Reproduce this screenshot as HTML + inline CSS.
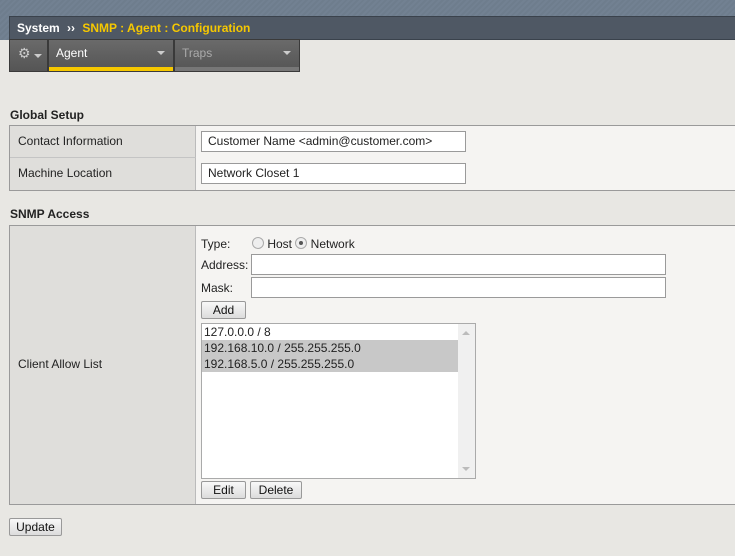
<!DOCTYPE html>
<html><head><style>
*{box-sizing:border-box;margin:0;padding:0}
body{width:735px;height:556px;background:#e8e7e3;font-family:"Liberation Sans",Arial,sans-serif;font-size:12px;color:#222;position:relative;overflow:hidden}
.a{position:absolute}
.top{left:0;top:0;width:735px;height:40px;background:repeating-linear-gradient(135deg,#6e7d8d 0 2px,#728192 2px 4px)}
.title{left:9px;top:16px;width:726px;height:24px;background:#4f5864;border:1px solid #3a424c;border-right:none;color:#fff;font-weight:bold;font-size:12px;line-height:22px;padding-left:7px}
.title span{color:#f6c800}
.nav{top:39px;height:33px;background:linear-gradient(#6a6a6a,#555);border:1px solid #3a3a3a;color:#fff;font-size:12px;line-height:26px;padding-left:7px}
.caret{position:absolute;right:8px;top:11px;width:0;height:0;border-left:4px solid transparent;border-right:4px solid transparent;border-top:4px solid #ccc}
.h{font-weight:bold;font-size:12px;left:10px}
.tbl{left:9px;width:726px;border:1px solid #9a9a9a;border-right:none;background:#f5f4f2}
.lab{position:absolute;left:0;width:186px;background:#dfdedb;border-right:1px solid #bbb;padding-left:8px}
.inp{position:absolute;background:#fff;border:1px solid #9a9a9a;padding-left:6px;line-height:18px;height:21px}
.btn{position:absolute;height:18px;border:1px solid #999;border-radius:2px;background:linear-gradient(#f8f8f8,#dcdcdc);text-align:center;line-height:16px;font-size:12px;color:#111}
.radio{display:inline-block;width:12px;height:12px;border-radius:50%;border:1px solid #aaa;background:#eee;vertical-align:-1px;position:relative}
</style></head><body>
<div class="a top"></div>
<div class="a title">System <span style="color:#fff;margin:0 4px">››</span> <span>SNMP : Agent : Configuration</span></div>
<div class="a nav" style="left:9px;width:39px;padding-left:8px;color:#ccc;font-size:14px">⚙<div class="caret" style="right:5px;top:14px"></div></div>
<div class="a nav" style="left:48px;width:126px">Agent<div class="caret"></div><div style="position:absolute;left:0;right:0;bottom:0;height:4px;background:#f6c800"></div></div>
<div class="a nav" style="left:174px;width:126px;color:#aaa">Traps<div class="caret"></div><div style="position:absolute;left:0;right:0;bottom:0;height:4px;background:#777"></div></div>

<div class="a h" style="top:108px">Global Setup</div>
<div class="a tbl" style="top:125px;height:66px">
 <div class="lab" style="top:0;height:32px;line-height:30px;border-bottom:1px solid #c4c4c4">Contact Information</div>
 <div class="lab" style="top:32px;height:32px;line-height:30px">Machine Location</div>
 <div class="inp" style="left:191px;top:5px;width:265px">Customer Name &lt;admin@customer.com&gt;</div>
 <div class="inp" style="left:191px;top:37px;width:265px">Network Closet 1</div>
</div>

<div class="a h" style="top:207px">SNMP Access</div>
<div class="a tbl" style="top:225px;height:280px">
 <div class="lab" style="top:0;height:278px;line-height:276px">Client Allow List</div>
 <div class="a" style="left:191px;top:11px">Type:</div>
 <div class="a" style="left:242px;top:11px"><span class="radio"></span> Host <span class="radio"><span style="position:absolute;left:3px;top:3px;width:4px;height:4px;border-radius:50%;background:#555"></span></span> Network</div>
 <div class="a" style="left:191px;top:32px">Address:</div>
 <div class="inp" style="left:241px;top:28px;width:415px"></div>
 <div class="a" style="left:191px;top:55px">Mask:</div>
 <div class="inp" style="left:241px;top:51px;width:415px"></div>
 <div class="btn" style="left:191px;top:75px;width:45px">Add</div>
 <div class="a" style="left:191px;top:97px;width:275px;height:156px;background:#fff;border:1px solid #aaa;line-height:16px">
  <div style="padding-left:2px">127.0.0.0 / 8</div>
  <div style="padding-left:2px;background:#c8c8c8;width:256px">192.168.10.0 / 255.255.255.0</div>
  <div style="padding-left:2px;background:#c8c8c8;width:256px">192.168.5.0 / 255.255.255.0</div>
  <div style="position:absolute;right:0;top:0;width:17px;height:154px;background:#f0f0f0"></div>
  <div style="position:absolute;right:5px;top:7px;border-left:4px solid transparent;border-right:4px solid transparent;border-bottom:4px solid #bbb"></div>
  <div style="position:absolute;right:5px;bottom:7px;border-left:4px solid transparent;border-right:4px solid transparent;border-top:4px solid #bbb"></div>
 </div>
 <div class="btn" style="left:191px;top:255px;width:45px">Edit</div>
 <div class="btn" style="left:240px;top:255px;width:52px">Delete</div>
</div>
<div class="btn" style="left:9px;top:518px;width:53px">Update</div>
</body></html>
